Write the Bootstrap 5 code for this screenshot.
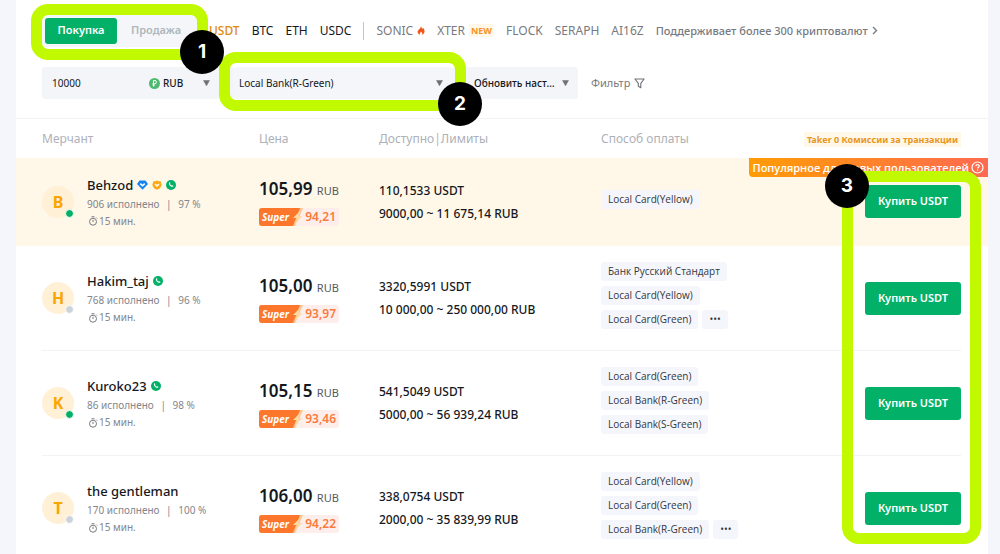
<!DOCTYPE html>
<html lang="ru">
<head>
<meta charset="utf-8">
<meta name="viewport" content="width=device-width, initial-scale=1">
<title>P2P — Купить USDT</title>
<link href="https://cdn.jsdelivr.net/npm/bootstrap@5.3.0/dist/css/bootstrap.min.css" rel="stylesheet">
<style>
  :root { --green: #03b068; --lime: #c0f900; --muted: #83868c; --pale: #adb1b8; --soft: #f5f6f9; --ink: #15181d; }
  body { background: #f4f6fb; color: var(--ink); font-family: "Noto Sans", "Open Sans", sans-serif; font-size: 12px; line-height: 16px; }
  main { margin-left: 16px; margin-right: 12px; padding: 15px 27px 0 26px; min-height: 100vh; }
  a { color: inherit; text-decoration: none; }
  svg { flex: none; display: block; }

  .toprow { height: 31px; font-size: 12px; }
  .side-switch { width: 156px; background: var(--soft); border-radius: 4px; padding: 3px; }
  .side-switch .btn { --bs-btn-padding-y: 0; --bs-btn-padding-x: 0; --bs-btn-border-width: 0; --bs-btn-border-radius: 3px; --bs-btn-font-size: 11px; --bs-btn-font-weight: 600; --bs-btn-color: #adb6bb; height: 26px; }
  .btn-buy, .side-switch .btn.active { --bs-btn-color: #fff; --bs-btn-bg: var(--green); --bs-btn-active-bg: var(--green); --bs-btn-active-color: #fff; --bs-btn-hover-bg: #02995a; --bs-btn-hover-color: #fff; }
  .side-switch .buy-side { width: 72px; }
  .coins .active { color: #e08a10; font-weight: 500; }
  .coins { color: var(--ink); gap: 12px; margin-left: 11px; }
  .coins .minor { color: #777a80; }
  .coins .more { font-size: 11px; font-weight: 500; }
  .coins .vr { height: 18px; }
  .new-tag { background: #fff7e8; color: #f7931e; font-size: 9px; line-height: 13px; font-weight: 700; padding: 0 2px; }

  .filters { margin-top: 21px; height: 32px; }
  .field { background: #f4f5f8; border-radius: 3px; height: 32px; }
  .field input, .field select { appearance: none; border: 0; background: transparent; color: var(--ink); font-size: 10px; padding: 0; outline: 0; }
  .amount { width: 192px; padding: 0 24px 0 10px; }
  .amount input { width: 90px; }
  .amount select { width: 40px; font-weight: 500; margin-left: 3px; }
  .bank { width: 218px; background: #f4f6fa; padding: 0 9px 0 5px; }
  .refresh { width: 126px; padding: 0 9px 0 22px; }
  .refresh select { font-weight: 500; }
  .filter-btn { background: none; border: 0; color: #777a80; font-size: 11px; padding: 0; margin-left: 13px; }

  .ring { position: absolute; border: 11px solid var(--lime); border-radius: 17px; pointer-events: none; z-index: 3; }
  .step { position: absolute; width: 44px; height: 44px; border-radius: 50%; background: #000; color: #fff; font: 700 19px/44px Inter, sans-serif; text-align: center; z-index: 4; }
  .ring-1 { inset: -11px -10px -13px -11px; }
  .step-1 { right: -26px; bottom: -27px; }
  .ring-2 { inset: -15px -14px -12px -15px; }
  .step-2 { right: -30px; bottom: -27px; }
  .ring-3 { width: 139px; height: 373px; right: -20px; top: 52px; }
  .step-3 { right: 92px; top: 45px; }

  .offers-wrap { margin: 19px -27px 0 -26px; padding: 0 27px 0 26px; border-top: 1px solid #f2f3f5; }
  .offers { table-layout: fixed; border-collapse: separate; border-spacing: 0; margin: 0; width: 100%; }
  .offers th, .offers td { padding: 0; vertical-align: middle; }
  .offers th { height: 39px; font-weight: 400; color: var(--pale); font-size: 12px; }
  .offers td { height: 105px; border-bottom: 1px solid #f2f3f5; }
  .offers .hot td { height: 88px; background: #fff7e8; border-color: #fff7e8; }
  .offers .hot { box-shadow: -26px 0 #fff7e8, 27px 0 #fff7e8; }
  .c-merchant { width: 217px; } .c-price { width: 120px; } .c-limits { width: 222px; }
  .taker { display: inline-block; background: #fff7e8; color: #e8961e; font-size: 9px; line-height: 15px; font-weight: 700; padding: 0 3px; white-space: nowrap; }
  .popular { position: absolute; right: -27px; top: 39px; height: 19px; padding: 0 4px; font: 600 11px/19px "Open Sans", sans-serif; color: #fff; white-space: nowrap; background: linear-gradient(90deg, #ff9c05, #ff6a50); border-bottom-left-radius: 4px; gap: 2px; }

  .avatar { width: 32px; height: 32px; border-radius: 50%; background: #fff0d6; color: #f9a600; font-size: 16px; font-weight: 700; margin-right: 13px; }
  .dot { position: absolute; right: 0; bottom: 0; width: 9px; height: 9px; border: 1px solid #fff; border-radius: 50%; background: #cdd3da; }
  .dot.on { background: var(--green); }
  .nick { font-size: 13px; line-height: 22px; font-weight: 500; gap: 4px; }
  .stats { font-size: 10px; line-height: 17px; color: var(--muted); }
  .stats .sep { margin: 0 4px; }
  .price { font-size: 17px; line-height: 24px; font-weight: 600; }
  .price small { font-size: 11px; font-weight: 400; color: #555a61; }
  .super { width: 80px; height: 18px; border-radius: 3px; background: #fdeeeb; color: #fb7a3c; font-size: 12px; font-weight: 600; margin-top: 5px; overflow: hidden; padding-right: 3px; }
  .super svg text { font: italic 700 10px "Noto Sans", sans-serif; fill: #fff; }
  .limits { line-height: 23px; font-weight: 500; }
  .pay { display: inline-block; background: #f5f6fb; color: #33373d; border-radius: 3px; font-family: "Open Sans", sans-serif; font-size: 10px; line-height: 19px; padding: 0 7px; white-space: nowrap; }
  .pays { gap: 5px; padding-bottom: 5px; }
  .btn-buy { --bs-btn-border-width: 0; --bs-btn-padding-y: 0; --bs-btn-padding-x: 0; --bs-btn-font-size: 11px; --bs-btn-font-weight: 600; --bs-btn-border-radius: 3px; width: 96px; height: 33px; }
</style>
</head>
<body>
<svg width="0" height="0" class="position-absolute" aria-hidden="true">
  <defs>
    <symbol id="phone" viewBox="0 0 10 10"><circle cx="5" cy="5" r="5" fill="#03b068"/><path d="M3.1 2.5c.5-.5.9-.3 1.2.4.2.5-.3.7-.2 1 .3.7.9 1.3 1.6 1.700.4.1.6-.5 1.100-.2.8.4.8.8.3 1.200-1.500 1.200-5-1.900-4-4.100z" fill="#fff"/></symbol>
    <symbol id="gem" viewBox="0 0 11 10"><path d="M2.500.5h6L11 4 5.500 9.800 0 4z" fill="#1683f5"/><path d="M3.300 3.600 5.500 5.700 7.700 3.600" fill="none" stroke="#fff" stroke-width="1.500"/></symbol>
    <symbol id="medal" viewBox="0 0 10 10"><path d="M1.500 1.200 4 1.200 5 .2 6 1.200 8.500 1.200 9.700 5 8 8.300 5 9.800 2 8.300.3 5z" fill="#fba813"/><path d="M3 4l2 2 2-2" fill="none" stroke="#fff" stroke-width="1.500"/></symbol>
    <symbol id="watch" viewBox="0 0 10 10"><g fill="none" stroke="#777a80"><circle cx="5" cy="5.700" r="3.500"/><path d="M3.500.8h3M5 3.800v2.200M8.300 1.600l.9.9"/></g></symbol>
    <symbol id="caret" viewBox="0 0 7 6"><path d="M.5.5h6L3.500 5.800z" fill="#6c7077" stroke="#6c7077" stroke-width=".5" stroke-linejoin="round"/></symbol>
    <symbol id="flash" viewBox="0 0 44 18"><path d="M0 0h44L36 18H0z" fill="#ffc58f"/><path d="M0 0h41l-7 18H0z" fill="#fc762c"/><path d="M42 2l-8 8h4l-2 6 7-8h-4z" fill="#ffd9a0"/></symbol>
  </defs>
</svg>
<main class="bg-white">
  <div class="toprow d-flex align-items-center text-nowrap">
    <div class="side-switch position-relative d-flex" role="group" aria-label="Сторона сделки">
      <button type="button" class="btn buy-side active">Покупка</button>
      <button type="button" class="btn flex-fill">Продажа</button>
      <span class="ring ring-1"></span><span class="step step-1">1</span>
    </div>
    <nav class="coins d-flex align-items-center" aria-label="Монеты">
      <a href="#" class="active">USDT</a>
      <a href="#">BTC</a>
      <a href="#">ETH</a>
      <a href="#">USDC</a>
      <span class="vr align-self-center"></span>
      <a href="#" class="minor d-flex align-items-center gap-1">SONIC
        <svg width="8" height="9" viewBox="0 0 8 9"><path d="M4 0c.2 1.500 1.200 2 1.600 2.800l.8-.8C7.600 4 7.800 5 7.300 6.500 6.800 8 5.500 9 5.300 9 5.700 7.500 4.800 6.500 4 5.800 3.300 6.700 2.400 7.500 2.800 9 1.500 8.500.5 7 .6 5.600.7 4 3.800 2.600 4 0z" fill="#f2571e"/></svg></a>
      <a href="#" class="minor d-flex align-items-center gap-1">XTER <span class="new-tag">NEW</span></a>
      <a href="#" class="minor">FLOCK</a>
      <a href="#" class="minor">SERAPH</a>
      <a href="#" class="minor">AI16Z</a>
      <a href="#" class="minor more d-flex align-items-center gap-1">Поддерживает более 300 криптовалют
        <svg width="6" height="9" viewBox="0 0 6 9"><path d="M1 1l3.500 3.500L1 8" fill="none" stroke="#777a80" stroke-width="1.400"/></svg></a>
    </nav>
  </div>

  <form class="filters d-flex align-items-center">
    <div class="field amount d-flex align-items-center">
      <input type="text" value="10000" aria-label="Сумма">
      <svg class="ms-auto" width="11" height="11" viewBox="0 0 11 11"><circle cx="5.500" cy="5.500" r="5.500" fill="#4cb96f"/><path d="M4.500 8.500v-6h1.300a1.500 1.500 0 0 1 0 3.200H3.500M3.500 7h2.700" fill="none" stroke="#fff"/></svg>
      <select aria-label="Валюта"><option>RUB</option></select>
      <svg width="7" height="6"><use href="#caret"/></svg>
    </div>
    <div class="field bank position-relative d-flex align-items-center">
      <select class="flex-fill" aria-label="Способ оплаты"><option>Local Bank(R-Green)</option></select>
      <svg width="7" height="6"><use href="#caret"/></svg>
      <span class="ring ring-2"></span><span class="step step-2">2</span>
    </div>
    <div class="field refresh d-flex align-items-center">
      <select class="flex-fill" aria-label="Обновление"><option>Обновить наст…</option></select>
      <svg width="7" height="6"><use href="#caret"/></svg>
    </div>
    <button type="button" class="filter-btn d-flex align-items-center gap-1">Фильтр
      <svg width="11" height="11" viewBox="0 0 11 11"><path d="M.9 1h9.200L6.800 5.300v4.400L4.300 8.300v-3z" fill="none" stroke="#6c7077" stroke-width="1.100" stroke-linejoin="round"/></svg></button>
  </form>

  <section class="offers-wrap">
    <div class="position-relative">
      <table class="offers">
        <thead><tr>
          <th class="c-merchant">Мерчант</th><th class="c-price">Цена</th><th class="c-limits">Доступно|Лимиты</th><th>Способ оплаты</th>
          <th class="text-end"><span class="taker">Taker 0 Комиссии за транзакции</span></th>
        </tr></thead>
        <tbody>
          <tr class="hot">
            <td><div class="d-flex align-items-center">
              <div class="avatar position-relative d-flex align-items-center justify-content-center">B<span class="dot on"></span></div>
              <div><div class="nick d-flex align-items-center">Behzod <svg width="11" height="10"><use href="#gem"/></svg><svg width="10" height="10"><use href="#medal"/></svg><svg width="10" height="10"><use href="#phone"/></svg></div>
                <div class="stats">906 исполнено <span class="sep">|</span> 97 %</div>
                <div class="stats d-flex align-items-center"><svg width="12" height="10"><use href="#watch"/></svg>15 мин.</div></div>
            </div></td>
            <td><div class="price">105,99 <small>RUB</small></div>
              <div class="super d-flex align-items-center justify-content-between"><svg width="44" height="18"><use href="#flash"/><text x="3" y="13">Super</text></svg>94,21</div></td>
            <td class="limits">110,1533 USDT<br>9000,00 ~ 11 675,14 RUB</td>
            <td><div class="pays d-flex flex-column align-items-start"><span class="pay">Local Card(Yellow)</span></div></td>
            <td class="text-end"><button type="button" class="btn btn-buy">Купить USDT</button></td>
          </tr>
          <tr>
            <td><div class="d-flex align-items-center">
              <div class="avatar position-relative d-flex align-items-center justify-content-center">H<span class="dot"></span></div>
              <div><div class="nick d-flex align-items-center">Hakim_taj <svg width="10" height="10"><use href="#phone"/></svg></div>
                <div class="stats">768 исполнено <span class="sep">|</span> 96 %</div>
                <div class="stats d-flex align-items-center"><svg width="12" height="10"><use href="#watch"/></svg>15 мин.</div></div>
            </div></td>
            <td><div class="price">105,00 <small>RUB</small></div>
              <div class="super d-flex align-items-center justify-content-between"><svg width="44" height="18"><use href="#flash"/><text x="3" y="13">Super</text></svg>93,97</div></td>
            <td class="limits">3320,5991 USDT<br>10 000,00 ~ 250 000,00 RUB</td>
            <td><div class="pays d-flex flex-column align-items-start"><span class="pay">Банк Русский Стандарт</span><span class="pay">Local Card(Yellow)</span>
              <div class="d-flex gap-1"><span class="pay">Local Card(Green)</span><span class="pay">•••</span></div></div></td>
            <td class="text-end"><button type="button" class="btn btn-buy">Купить USDT</button></td>
          </tr>
          <tr>
            <td><div class="d-flex align-items-center">
              <div class="avatar position-relative d-flex align-items-center justify-content-center">K<span class="dot on"></span></div>
              <div><div class="nick d-flex align-items-center">Kuroko23 <svg width="10" height="10"><use href="#phone"/></svg></div>
                <div class="stats">86 исполнено <span class="sep">|</span> 98 %</div>
                <div class="stats d-flex align-items-center"><svg width="12" height="10"><use href="#watch"/></svg>15 мин.</div></div>
            </div></td>
            <td><div class="price">105,15 <small>RUB</small></div>
              <div class="super d-flex align-items-center justify-content-between"><svg width="44" height="18"><use href="#flash"/><text x="3" y="13">Super</text></svg>93,46</div></td>
            <td class="limits">541,5049 USDT<br>5000,00 ~ 56 939,24 RUB</td>
            <td><div class="pays d-flex flex-column align-items-start"><span class="pay">Local Card(Green)</span><span class="pay">Local Bank(R-Green)</span><span class="pay">Local Bank(S-Green)</span></div></td>
            <td class="text-end"><button type="button" class="btn btn-buy">Купить USDT</button></td>
          </tr>
          <tr>
            <td><div class="d-flex align-items-center">
              <div class="avatar position-relative d-flex align-items-center justify-content-center">T<span class="dot"></span></div>
              <div><div class="nick d-flex align-items-center">the gentleman</div>
                <div class="stats">170 исполнено <span class="sep">|</span> 100 %</div>
                <div class="stats d-flex align-items-center"><svg width="12" height="10"><use href="#watch"/></svg>15 мин.</div></div>
            </div></td>
            <td><div class="price">106,00 <small>RUB</small></div>
              <div class="super d-flex align-items-center justify-content-between"><svg width="44" height="18"><use href="#flash"/><text x="3" y="13">Super</text></svg>94,22</div></td>
            <td class="limits">338,0754 USDT<br>2000,00 ~ 35 839,99 RUB</td>
            <td><div class="pays d-flex flex-column align-items-start"><span class="pay">Local Card(Yellow)</span><span class="pay">Local Card(Green)</span>
              <div class="d-flex gap-1"><span class="pay">Local Bank(R-Green)</span><span class="pay">•••</span></div></div></td>
            <td class="text-end"><button type="button" class="btn btn-buy">Купить USDT</button></td>
          </tr>
        </tbody>
      </table>
      <div class="popular d-flex align-items-center">Популярное для новых пользователей
        <svg width="13" height="13" viewBox="0 0 13 13"><circle cx="6.500" cy="6.500" r="5.500" fill="none" stroke="#fff" stroke-width="1.200"/><path d="M4.800 5.300c0-2.300 3.500-2.200 3.500-.2 0 1.200-1.700 1.200-1.700 2.500M6.600 8.500v1.200" fill="none" stroke="#fff" stroke-width="1.200"/></svg></div>
      <span class="ring ring-3"></span><span class="step step-3">3</span>
    </div>
  </section>
</main>
<script src="https://cdn.jsdelivr.net/npm/bootstrap@5.3.0/dist/js/bootstrap.bundle.min.js"></script>
</body>
</html>
